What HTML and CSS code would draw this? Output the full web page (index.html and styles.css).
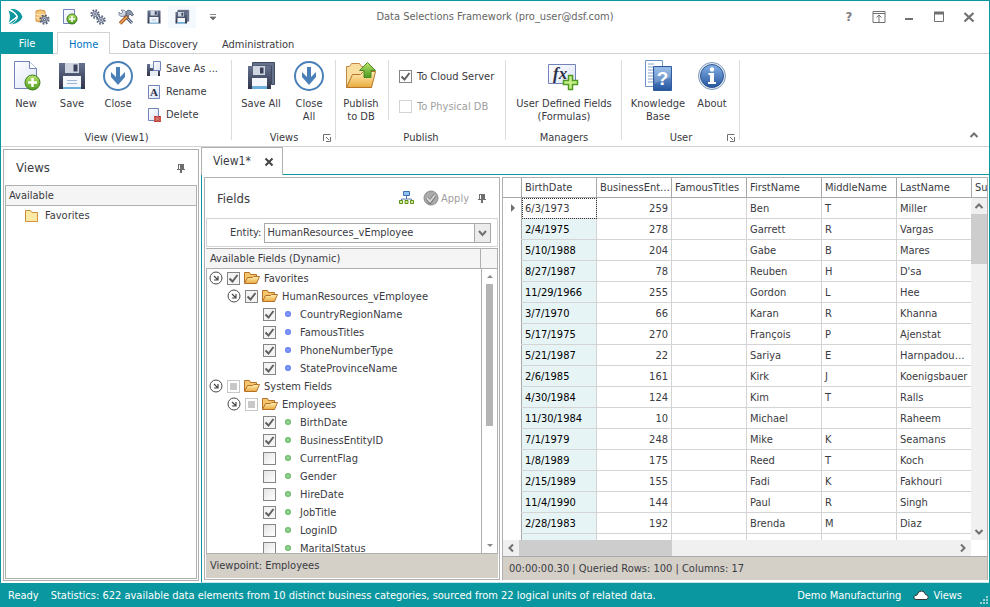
FILE: index.html
```html
<!DOCTYPE html>
<html lang="en">

<head>
	<meta charset="utf-8">
	<title>Data Selections Framework</title>
	<link rel="stylesheet" href="styles.css">
</head>

<body>

	<svg class="sprite" aria-hidden="true">
		<defs>
			<linearGradient id="g-floppy" x1="0" y1="0" x2="0" y2="1">
				<stop offset="0" stop-color="#66728f" />
				<stop offset="1" stop-color="#2f354a" />
			</linearGradient>
			<linearGradient id="g-folder" x1="0" y1="0" x2="0" y2="1">
				<stop offset="0" stop-color="#fff0b8" />
				<stop offset="1" stop-color="#e9a93c" />
			</linearGradient>
			<linearGradient id="g-page" x1="0" y1="0" x2="1" y2="1">
				<stop offset="0" stop-color="#ffffff" />
				<stop offset="1" stop-color="#dbe3f5" />
			</linearGradient>
			<linearGradient id="g-green" x1="0" y1="0" x2="0" y2="1">
				<stop offset="0" stop-color="#b9e36b" />
				<stop offset="1" stop-color="#4b9a1e" />
			</linearGradient>
			<linearGradient id="g-blue" x1="0" y1="0" x2="0" y2="1">
				<stop offset="0" stop-color="#86b2e6" />
				<stop offset="1" stop-color="#24549f" />
			</linearGradient>
		</defs>
		<symbol id="i-floppy" viewBox="0 0 32 32">
			<path d="M3 3h26v26H3z" fill="url(#g-floppy)" />
			<path d="M9 3h14v10H9z" fill="#cfd6e2" />
			<path d="M17.500 4.500h4v7h-4z" fill="#39415a" />
			<path d="M7 16h18v13H7z" fill="#f4f8fd" />
			<path d="M11 20.500h10M11 23.500h10" stroke="#9db6d6" />
			<path d="M7 27h18v2H7z" fill="#6bb0dc" />
		</symbol>
		<symbol id="i-floppies" viewBox="0 0 32 32">
			<path d="M7.500 2.500h22v22h-3V6H7.500z" fill="#66728c" stroke="#424a62" />
			<path d="M3 6h23v23H3z" fill="url(#g-floppy)" />
			<path d="M8 6h12v9H8z" fill="#cfd6e2" />
			<path d="M15 7.500h3.500v6H15z" fill="#39415a" />
			<path d="M7 18h15v11H7z" fill="#f4f8fd" />
			<path d="M7 26h15v3H7z" fill="#6bb0dc" />
		</symbol>
		<symbol id="i-new" viewBox="0 0 32 32">
			<path d="M4.500 1.500h15l7 7v20h-22z" fill="url(#g-page)" stroke="#7183b8" />
			<path d="M19.500 1.500v7h7" fill="#fff" stroke="#7183b8" />
			<circle cx="22.500" cy="22.500" r="7.500" fill="url(#g-green)" stroke="#3d7d1d" />
			<path d="M22.500 18v9M18 22.500h9" stroke="#fff" stroke-width="2.500" />
		</symbol>
		<symbol id="i-new16" viewBox="0 0 16 16">
			<path d="M1.500 .5h11v14h-11z" fill="url(#g-page)" stroke="#7183b8" />
			<circle cx="10" cy="10" r="5" fill="url(#g-green)" stroke="#3d7d1d" />
			<path d="M10 7v6M7 10h6" stroke="#fff" stroke-width="1.600" />
		</symbol>
		<symbol id="i-down" viewBox="0 0 32 32">
			<circle cx="16" cy="16" r="14" fill="#fff" stroke="#4a80b8" stroke-width="2" />
			<path d="M14 7h4v10l5-5v5l-7 8-7-8v-5l5 5z" fill="#4a80b8" />
		</symbol>
		<symbol id="i-saveas" viewBox="0 0 16 16">
			<path d="M1 3h13v12H1z" fill="url(#g-floppy)" />
			<path d="M4 3h4v4H4z" fill="#e9eef5" />
			<path d="M4 10h8v5H4z" fill="#e9eef5" />
			<path d="M7.500 .5h7v9h-7z" fill="url(#g-page)" stroke="#7183b8" />
		</symbol>
		<symbol id="i-delete" viewBox="0 0 16 16">
			<path d="M2.500 1.500h10v12h-10z" fill="url(#g-page)" stroke="#7183b8" />
			<path d="M8 9h7v6H8z" fill="#d9574c" />
			<path d="M9 9.500l5 5M14 9.500l-5 5" stroke="#8e1d18" stroke-width="1.500" />
			<path d="M9.500 10l4 4M13.500 10l-4 4" stroke="#f6b5ae" />
		</symbol>
		<symbol id="i-publish" viewBox="0 0 32 32">
			<path d="M1.500 27.500V6.500h3l2-3h8l2 3h10v21z" fill="#f8dfa0" stroke="#c08a45" />
			<path d="M1.500 27.500l6-13h8l3-3h12l-4 16z" fill="url(#g-folder)" stroke="#b5762b" />
			<path d="M22.500 2.500l8 8h-4.500v7h-7v-7h-4.500z" fill="url(#g-green)" stroke="#4c8a26" />
		</symbol>
		<symbol id="i-info" viewBox="0 0 32 32">
			<circle cx="16" cy="16" r="13.500" fill="#e8eef7" stroke="#7f97ba" />
			<circle cx="16" cy="16" r="11.500" fill="url(#g-blue)" stroke="#2d5593" />
			<circle cx="16" cy="9.500" r="2.200" fill="#fff" />
			<path d="M12.500 13h5.500v9h2v2h-8v-2h2v-7h-1.500z" fill="#fff" />
		</symbol>
		<symbol id="i-logo" viewBox="0 0 16 16">
			<path d="M3 0h4q7 2 8.500 8-2.500 6-11 7.500Q11 11 11 7.500 9 3 3 0z" fill="#0b979f" />
			<path d="M1.500 1.500q6 2 8 6L1.500 13.500q3-5 0-12z" fill="#0b979f" />
			<path d="M9.500 9.500q-2 4-6.500 5.500l-1-.5z" fill="#0b979f" />
			<path d="M1 .5q7 2 9 7l-9 7.500" fill="none" stroke="#fff" stroke-width=".8" />
		</symbol>
		<symbol id="i-gear" viewBox="0 0 16 16">
			<circle cx="8" cy="8" r="6" fill="none" stroke="#56617a" stroke-width="3" stroke-dasharray="2.600 2.110" />
			<circle cx="8" cy="8" r="4" fill="#e4e9f2" stroke="#56617a" stroke-width="1.500" />
			<circle cx="8" cy="8" r="1.600" fill="#fff" stroke="#56617a" stroke-width="1.500" />
		</symbol>
		<symbol id="i-dbgear" viewBox="0 0 16 16">
			<path d="M2 2q4-2 9 0v10q-5 2-9 0z" fill="#f4c77a" stroke="#d79245" />
			<path d="M2 5q4 2 9 0M2 8.500q4 2 9 0" fill="none" stroke="#fff1cf" />
			<use href="#i-gear" x="5" y="5" width="11" height="11" />
		</symbol>
		<symbol id="i-gears" viewBox="0 0 16 16">
			<use href="#i-gear" x="0" y="0" width="10" height="10" />
			<use href="#i-gear" x="6" y="6" width="10" height="10" />
		</symbol>
		<symbol id="i-tools" viewBox="0 0 16 16">
			<path d="M5 5l9 9" stroke="#4c5974" stroke-width="3" />
			<path d="M5 5l9 9" stroke="#c9d1df" />
			<path d="M10 6.500L2 14.500" stroke="#a24f14" stroke-width="3.400" />
			<path d="M9.500 7L2 14.500" stroke="#f2a860" stroke-width="1.400" />
			<path d="M8 3l2-2 3 1 2.500 4-1.500 1-2-2-2.500 3z" fill="#8b97ad" stroke="#4c5974" stroke-width=".8" />
			<path d="M1 3l2 2 2-2-2-2q4-.5 5 2l-1 4-4 .5q-3-1-2-4.500z" fill="#d3dae6" stroke="#6d7890" stroke-width=".8" />
		</symbol>
		<symbol id="i-folder" viewBox="0 0 16 16">
			<path d="M1.500 13.500v-11h5l1.500 2h5.500v9z" fill="#fde9a6" stroke="#c88e3c" />
			<path d="M1.500 13.500h12V5" fill="none" stroke="#d8913d" />
		</symbol>
		<symbol id="i-open" viewBox="0 0 16 16">
			<path d="M.5 12.500v-10h5l1 2h6v8z" fill="#f5c76c" stroke="#b5712a" />
			<path d="M.5 13.500l3-6h5l1-1h6l-3 7z" fill="url(#g-folder)" stroke="#b5712a" />
		</symbol>
		<symbol id="i-pin" viewBox="0 0 10 10">
			<path d="M2 1h6v5h1v1H6v3H4V7H1V6h1z" fill="#6e6e6e" />
			<path d="M3.500 2v4" stroke="#fff" />
		</symbol>
		<symbol id="i-launch" viewBox="0 0 8 8">
			<path d="M.5 7V.5H7.500" fill="none" stroke="#707070" />
			<path d="M3 3l3 3M7.500 3v4.500H3" fill="none" stroke="#707070" />
		</symbol>
		<symbol id="i-expand" viewBox="0 0 14 14">
			<circle cx="7" cy="7" r="6" fill="#fff" stroke="#4a4a4a" />
			<path d="M5 5l3.500 3.500M9 5v4H5" fill="none" stroke="#4a4a4a" stroke-width="1.200" />
		</symbol>
		<symbol id="i-chev" viewBox="0 0 10 10">
			<path d="M1.500 7L5 3.500 8.500 7" fill="none" stroke="#707070" stroke-width="2" />
		</symbol>
		<symbol id="i-tree" viewBox="0 0 16 16">
			<path d="M7.500 6v3M2.500 11V9h10v2" fill="none" stroke="#5878a8" />
			<path d="M4.500 1.500h6v4h-6z" fill="#8ec0f2" stroke="#3b6fb3" />
			<path d="M.5 10.500h3v3h-3zM6 10.500h3v3H6zM11.500 10.500h3v3h-3z" fill="#d6f0a0" stroke="#5d8f12" />
		</symbol>
		<symbol id="i-apply" viewBox="0 0 16 16">
			<circle cx="8" cy="8" r="7" fill="#aaa" stroke="#8c8c8c" />
			<path d="M4 8l3 4 5-7" fill="none" stroke="#777" stroke-width="3.500" />
			<path d="M4 8l3 3.500 5-6.500" fill="none" stroke="#d8d8d8" stroke-width="2" />
		</symbol>
	</svg>

	<div class="window">

		<header class="titlebar">
			<div class="quick">
				<svg class="logo"><use href="#i-logo" /></svg>
				<button type="button" aria-label="Data source"><svg><use href="#i-dbgear" /></svg></button>
				<button type="button" aria-label="New view"><svg><use href="#i-new16" /></svg></button>
				<button type="button" aria-label="Settings"><svg><use href="#i-gears" /></svg></button>
				<button type="button" aria-label="Tools"><svg><use href="#i-tools" /></svg></button>
				<button type="button" aria-label="Save view"><svg><use href="#i-floppy" /></svg></button>
				<button type="button" class="hot" aria-label="Save all views"><svg><use href="#i-floppies" /></svg></button>
				<button type="button" class="more" aria-label="Customize"><svg viewBox="0 0 8 8"><path d="M1 1.500h6M1 4h6L4 7z" fill="#707070" stroke="#707070" stroke-width=".8" /></svg></button>
			</div>
			<div class="title">Data Selections Framework (pro_user@dsf.com)</div>
			<div class="winbuttons">
				<button type="button" class="ask" aria-label="Help">?</button>
				<button type="button" aria-label="Ribbon display"><svg viewBox="0 0 14 14"><path d="M1 1.500h12v11H1zM1 3.500h12M7 12V5M4.500 7.500L7 5l2.500 2.500" fill="none" stroke="#707070" /></svg></button>
				<button type="button" aria-label="Minimize"><svg viewBox="0 0 14 14"><path d="M3 9h8" stroke="#707070" stroke-width="2" /></svg></button>
				<button type="button" aria-label="Maximize"><svg viewBox="0 0 14 14"><path d="M2.500 2.500h9v9h-9z" fill="none" stroke="#707070" /><path d="M2 3h10" stroke="#707070" stroke-width="3" /></svg></button>
				<button type="button" aria-label="Close window"><svg viewBox="0 0 14 14"><path d="M2.500 3l9 8.500M11.500 3l-9 8.500" stroke="#707070" stroke-width="2.200" /></svg></button>
			</div>
		</header>

		<nav class="tabs">
			<button type="button" class="file">File</button>
			<a href="#home" class="tab active">Home</a>
			<a href="#discovery" class="tab">Data Discovery</a>
			<a href="#administration" class="tab">Administration</a>
		</nav>

		<section class="ribbon" id="home">
			<div class="group g-view">
				<div class="tools">
					<button type="button" class="big"><svg><use href="#i-new" /></svg>New</button>
					<button type="button" class="big"><svg><use href="#i-floppy" /></svg>Save</button>
					<button type="button" class="big"><svg><use href="#i-down" /></svg>Close</button>
					<div class="stack">
						<button type="button" class="small"><svg><use href="#i-saveas" /></svg>Save As ...</button>
						<button type="button" class="small"><svg viewBox="0 0 16 16"><path d="M2.500 1.500h11v13h-11z" fill="url(#g-page)" stroke="#7183b8" /><text x="8" y="12" text-anchor="middle" class="serif" font-size="11">A</text></svg>Rename</button>
						<button type="button" class="small"><svg><use href="#i-delete" /></svg>Delete</button>
					</div>
				</div>
				<div class="caption">View (View1)</div>
			</div>
			<div class="group g-views">
				<div class="tools">
					<button type="button" class="big wide"><svg><use href="#i-floppies" /></svg>Save All</button>
					<button type="button" class="big"><svg><use href="#i-down" /></svg>Close<br>All</button>
				</div>
				<div class="caption">Views</div>
				<button type="button" class="launch" aria-label="Views options"><svg><use href="#i-launch" /></svg></button>
			</div>
			<div class="group g-publish">
				<div class="tools">
					<button type="button" class="big"><svg><use href="#i-publish" /></svg>Publish<br>to DB</button>
					<div class="checks">
						<label><input type="checkbox" class="check plain" checked>To Cloud Server</label>
						<label class="off"><input type="checkbox" class="check plain" disabled>To Physical DB</label>
					</div>
				</div>
				<div class="caption">Publish</div>
			</div>
			<div class="group g-managers">
				<div class="tools">
					<button type="button" class="big"><svg viewBox="0 0 32 32"><path d="M.5 4.500h27v19H.5z" fill="url(#g-page)" stroke="#7183b8" /><text x="5" y="19" class="serif italic" font-size="17">fx</text><path d="M20.500 15.500h4v5h5v4h-5v5h-4v-5h-5v-4h5z" fill="#c7f08a" stroke="#4f9a25" stroke-width="1.500" /></svg>User Defined Fields<br>(Formulas)</button>
				</div>
				<div class="caption">Managers</div>
			</div>
			<div class="group g-user">
				<div class="tools">
					<button type="button" class="big wider"><svg viewBox="0 0 32 32"><path d="M3.500 .5h17v26h-17z" fill="#fff" stroke="#6e93c8" /><path d="M6 4h6M6 7h6M6 10h6M6 13h6M6 16h6M6 19h6M6 22h6" stroke="#8aa5cc" /><path d="M11.500 6.500h18v24h-18z" fill="url(#g-blue)" stroke="#315d9c" /><path d="M12.500 7.500h16v10l-16 6z" fill="#fff" opacity=".2" /><text x="20.500" y="25" text-anchor="middle" class="mark-q" font-size="19">?</text></svg>Knowledge<br>Base</button>
					<button type="button" class="big"><svg><use href="#i-info" /></svg>About</button>
				</div>
				<div class="caption">User</div>
				<button type="button" class="launch" aria-label="User options"><svg><use href="#i-launch" /></svg></button>
			</div>
			<button type="button" class="collapse" aria-label="Collapse ribbon"><svg><use href="#i-chev" /></svg></button>
		</section>

		<main class="work">

			<aside class="views">
				<div class="panelhead">
					<h2>Views</h2>
					<button type="button" aria-label="Pin views"><svg class="pin"><use href="#i-pin" /></svg></button>
				</div>
				<div class="viewlist">
					<div class="listhead">Available</div>
					<a href="#favorites" class="viewitem"><svg><use href="#i-folder" /></svg>Favorites</a>
				</div>
			</aside>

			<section class="doc">
				<div class="doctabs">
					<div class="doctab">View1*
						<button type="button" aria-label="Close view"><svg viewBox="0 0 10 10"><path d="M1.500 1.500l7 7M8.500 1.500l-7 7" stroke="#444" stroke-width="2" /></svg></button>
					</div>
				</div>
				<div class="docbody">

					<div class="fields">
						<div class="panelhead">
							<h2>Fields</h2>
							<button type="button" aria-label="Show hierarchy"><svg class="icon"><use href="#i-tree" /></svg></button>
							<button type="button" class="apply" disabled><svg class="icon"><use href="#i-apply" /></svg>Apply</button>
							<button type="button" aria-label="Pin fields"><svg class="pin"><use href="#i-pin" /></svg></button>
						</div>
						<div class="entity">
							<label for="entity">Entity:</label>
							<select id="entity">
								<option>HumanResources_vEmployee</option>
							</select>
						</div>
						<div class="listhead treehead"><span>Available Fields (Dynamic)</span></div>
						<div class="treebox">
							<ul class="tree">
								<li class="l1"><svg class="exp"><use href="#i-expand" /></svg><label><input type="checkbox" class="check" checked><svg class="icon"><use href="#i-open" /></svg>Favorites</label></li>
								<li class="l2"><svg class="exp"><use href="#i-expand" /></svg><label><input type="checkbox" class="check" checked><svg class="icon"><use href="#i-open" /></svg>HumanResources_vEmployee</label></li>
								<li class="l3"><label><input type="checkbox" class="check" checked><i class="dot blue"></i>CountryRegionName</label></li>
								<li class="l3"><label><input type="checkbox" class="check" checked><i class="dot blue"></i>FamousTitles</label></li>
								<li class="l3"><label><input type="checkbox" class="check" checked><i class="dot blue"></i>PhoneNumberType</label></li>
								<li class="l3"><label><input type="checkbox" class="check" checked><i class="dot blue"></i>StateProvinceName</label></li>
								<li class="l1"><svg class="exp"><use href="#i-expand" /></svg><label><input type="checkbox" class="check partial"><svg class="icon"><use href="#i-open" /></svg>System Fields</label></li>
								<li class="l2"><svg class="exp"><use href="#i-expand" /></svg><label><input type="checkbox" class="check partial"><svg class="icon"><use href="#i-open" /></svg>Employees</label></li>
								<li class="l3"><label><input type="checkbox" class="check" checked><i class="dot"></i>BirthDate</label></li>
								<li class="l3"><label><input type="checkbox" class="check" checked><i class="dot"></i>BusinessEntityID</label></li>
								<li class="l3"><label><input type="checkbox" class="check"><i class="dot"></i>CurrentFlag</label></li>
								<li class="l3"><label><input type="checkbox" class="check"><i class="dot"></i>Gender</label></li>
								<li class="l3"><label><input type="checkbox" class="check"><i class="dot"></i>HireDate</label></li>
								<li class="l3"><label><input type="checkbox" class="check" checked><i class="dot"></i>JobTitle</label></li>
								<li class="l3"><label><input type="checkbox" class="check"><i class="dot"></i>LoginID</label></li>
								<li class="l3"><label><input type="checkbox" class="check"><i class="dot"></i>MaritalStatus</label></li>
							</ul>
							<div class="treescroll">
								<i class="up"></i>
								<div class="track"><div class="thumb"></div></div>
								<i class="down"></i>
							</div>
						</div>
						<div class="strip">Viewpoint: Employees</div>
					</div>

					<div class="data">
						<div class="gridbox">
							<table class="grid">
								<colgroup>
									<col class="c-mark"><col class="c"><col class="c"><col class="c"><col class="c"><col class="c"><col class="c"><col>
								</colgroup>
								<thead>
									<tr><th></th><th>BirthDate</th><th>BusinessEntityID</th><th>FamousTitles</th><th>FirstName</th><th>MiddleName</th><th>LastName</th><th class="cut">Suffix</th></tr>
								</thead>
								<tbody>
									<tr class="current"><td><i class="mark"></i></td><td>6/3/1973</td><td>259</td><td></td><td>Ben</td><td>T</td><td>Miller</td><td></td></tr>
									<tr><td></td><td>2/4/1975</td><td>278</td><td></td><td>Garrett</td><td>R</td><td>Vargas</td><td></td></tr>
									<tr><td></td><td>5/10/1988</td><td>204</td><td></td><td>Gabe</td><td>B</td><td>Mares</td><td></td></tr>
									<tr><td></td><td>8/27/1987</td><td>78</td><td></td><td>Reuben</td><td>H</td><td>D'sa</td><td></td></tr>
									<tr><td></td><td>11/29/1966</td><td>255</td><td></td><td>Gordon</td><td>L</td><td>Hee</td><td></td></tr>
									<tr><td></td><td>3/7/1970</td><td>66</td><td></td><td>Karan</td><td>R</td><td>Khanna</td><td></td></tr>
									<tr><td></td><td>5/17/1975</td><td>270</td><td></td><td>François</td><td>P</td><td>Ajenstat</td><td></td></tr>
									<tr><td></td><td>5/21/1987</td><td>22</td><td></td><td>Sariya</td><td>E</td><td>Harnpadoungsataya</td><td></td></tr>
									<tr><td></td><td>2/6/1985</td><td>161</td><td></td><td>Kirk</td><td>J</td><td>Koenigsbauer</td><td></td></tr>
									<tr><td></td><td>4/30/1984</td><td>124</td><td></td><td>Kim</td><td>T</td><td>Ralls</td><td></td></tr>
									<tr><td></td><td>11/30/1984</td><td>10</td><td></td><td>Michael</td><td></td><td>Raheem</td><td></td></tr>
									<tr><td></td><td>7/1/1979</td><td>248</td><td></td><td>Mike</td><td>K</td><td>Seamans</td><td></td></tr>
									<tr><td></td><td>1/8/1989</td><td>175</td><td></td><td>Reed</td><td>T</td><td>Koch</td><td></td></tr>
									<tr><td></td><td>2/15/1989</td><td>155</td><td></td><td>Fadi</td><td>K</td><td>Fakhouri</td><td></td></tr>
									<tr><td></td><td>11/4/1990</td><td>144</td><td></td><td>Paul</td><td>R</td><td>Singh</td><td></td></tr>
									<tr><td></td><td>2/28/1983</td><td>192</td><td></td><td>Brenda</td><td>M</td><td>Diaz</td><td></td></tr>
									<tr><td></td><td>5/10/1985</td><td>60</td><td></td><td>Andy</td><td>C</td><td>Ruth</td><td></td></tr>
								</tbody>
							</table>
							<div class="vscroll">
								<button type="button" aria-label="Scroll up"><svg><use href="#i-chev" /></svg></button>
								<div class="track"><div class="thumb"></div></div>
								<button type="button" class="r180" aria-label="Scroll down"><svg><use href="#i-chev" /></svg></button>
							</div>
						</div>
						<div class="hscroll">
							<button type="button" class="r270" aria-label="Scroll left"><svg><use href="#i-chev" /></svg></button>
							<div class="track"><div class="thumb"></div></div>
							<button type="button" class="r90" aria-label="Scroll right"><svg><use href="#i-chev" /></svg></button>
						</div>
						<div class="strip">00:00:00.30 | Queried Rows: 100 | Columns: 17</div>
					</div>

				</div>
			</section>

		</main>

		<footer class="status">
			<span>Ready</span>
			<span class="stats">Statistics: 622 available data elements from 10 distinct business categories, sourced from 22 logical units of related data.</span>
			<span>Demo Manufacturing</span>
			<span class="cloud"><svg viewBox="0 0 16 12"><path d="M3 10.500Q.5 10 .8 8 1.500 6 4 6 5 2 8.500 2q3 0 4 3.500 3 .5 2.700 3-.5 2-2.200 2z" fill="#fff" stroke="#333" /></svg>Views</span>
			<svg class="grip" viewBox="0 0 8 8"><path d="M6 0h2v2H6zM3 3h2v2H3zM6 3h2v2H6zM0 6h2v2H0zM3 6h2v2H3zM6 6h2v2H6z" fill="#9fd0d3" /></svg>
		</footer>

	</div>

</body>

</html>
```
FILE: styles.css
```css
* {
	box-sizing: border-box;
}

body {
	margin: 0;
	font: 11px/13px "DejaVu Sans Condensed", "DejaVu Sans", Tahoma, sans-serif;
	color: #3a3a42;
}

button {
	display: flex;
	align-items: center;
	justify-content: center;
	padding: 0;
	border: 0;
	background: none;
	font: inherit;
	color: inherit;
}

a {
	color: inherit;
	text-decoration: none;
}

svg {
	flex: none;
	width: 16px;
	height: 16px;
}

.sprite {
	position: absolute;
	width: 0;
	height: 0;
}

.serif {
	font-family: "Liberation Serif", serif;
	font-weight: bold;
	fill: #2b3044;
}

.italic {
	font-style: italic;
}

.mark-q {
	font-family: "Liberation Sans", sans-serif;
	font-weight: bold;
	fill: #fff;
}

.window {
	display: flex;
	flex-direction: column;
	height: 100vh;
	border: 1px solid #0b979f;
	border-bottom: 0;
	background: #fff;
}

/* title bar */
.titlebar {
	display: grid;
	grid-template-columns: 1fr auto 1fr;
	align-items: center;
	height: 31px;
}

.quick {
	display: flex;
	align-items: center;
}

.quick button {
	width: 28px;
	height: 22px;
}

.quick .logo {
	margin: 0 5px 0 6px;
}

.quick .hot {
	background: #f4f9fe;
}

.quick .more {
	width: 34px;
}

.quick .more svg {
	width: 8px;
	height: 8px;
}

.title {
	color: #666;
}

.winbuttons {
	display: flex;
	justify-content: flex-end;
	padding-right: 5px;
}

.winbuttons button {
	width: 30px;
	height: 22px;
}

.winbuttons svg {
	width: 14px;
	height: 14px;
}

.winbuttons .ask {
	font-size: 13px;
	font-weight: bold;
	color: #808080;
}

/* tabs */
.tabs {
	display: flex;
	height: 22px;
	border-bottom: 1px solid #d2d2d2;
}

.tabs .file {
	width: 52px;
	height: 22px;
	margin-right: 4px;
	background: #0b979f;
	color: #fff;
}

.tab {
	height: 22px;
	padding: 5px 11px 0;
	border: 1px solid transparent;
	border-bottom: 0;
}

.tab.active {
	border-color: #d2d2d2;
	background: #fff;
	color: #0072c6;
}

/* ribbon */
.ribbon {
	display: flex;
	height: 93px;
	padding-top: 6px;
	border-bottom: 1px solid #d2d2d2;
}

.group {
	display: grid;
	grid-template: minmax(0, 1fr) 13px / 1fr;
	padding-bottom: 2px;
	background: linear-gradient(#dcdcdc, #dcdcdc) right top / 1px 80px no-repeat;
}

.g-view {
	width: 231px;
}

.g-views {
	width: 104px;
}

.g-publish {
	width: 170px;
}

.g-managers {
	width: 116px;
}

.g-user {
	width: 118px;
}

.tools {
	display: flex;
	justify-content: center;
}

.g-view .tools,
.g-publish .tools {
	justify-content: flex-start;
	padding-left: 2px;
}

.caption {
	grid-area: 2 / 1;
	text-align: center;
}

.launch {
	grid-area: 2 / 1;
	justify-self: end;
	align-self: center;
	margin-right: 5px;
}

.launch svg {
	width: 8px;
	height: 8px;
}

.big {
	flex-direction: column;
	justify-content: flex-start;
	min-width: 46px;
	gap: 5px;
	align-self: flex-start;
	text-align: center;
}

.big.wide {
	min-width: 50px;
}

.big.wider {
	min-width: 62px;
}

.big svg {
	width: 32px;
	height: 32px;
}

.stack {
	display: flex;
	flex-direction: column;
	padding-left: 5px;
}

.small {
	justify-content: flex-start;
	height: 23px;
	gap: 4px;
	margin-top: -3px;
	margin-bottom: 3px;
}

.checks {
	display: flex;
	flex-direction: column;
	gap: 16px;
	height: 60px;
	margin-left: 4px;
	padding: 9px 0 0 10px;
	border-left: 1px solid #dcdcdc;
}

.checks label {
	display: flex;
	align-items: center;
	gap: 5px;
	height: 14px;
}

.checks .off {
	color: #a0a0a0;
}

.collapse {
	margin: auto 10px 6px auto;
}

.collapse svg {
	width: 10px;
	height: 10px;
}

/* tick boxes */
.check {
	appearance: none;
	flex: none;
	width: 13px;
	height: 13px;
	margin: 0;
	border: 1px solid #858585;
	background: linear-gradient(135deg, #e4e4e4, #fff) center no-repeat;
}

.check:checked {
	background: url("data:image/svg+xml,%3Csvg xmlns='http://www.w3.org/2000/svg' viewBox='0 0 11 11'%3E%3Cpath d='M1.500 5.500l3 3 5-6.500' fill='none' stroke='%23606060' stroke-width='2'/%3E%3C/svg%3E") center no-repeat, #f4f4f4;
}

.check.plain {
	background-color: #fff;
}

.check.plain:disabled {
	border-color: #d4d4d4;
	background: #fff;
}

.check.partial {
	border-color: #c8c8c8;
	background: linear-gradient(#c8c8c8, #c8c8c8) center / 7px 7px no-repeat;
}

/* work area */
.work {
	display: flex;
	flex: 1;
	min-height: 0;
}

.views {
	display: flex;
	flex-direction: column;
	width: 196px;
	margin: 2px;
	padding: 0 1px 1px;
	border: 1px solid #b0b0b0;
}

.panelhead {
	display: flex;
	align-items: center;
	height: 35px;
	padding: 0 11px;
}

.panelhead h2 {
	flex: 1;
	margin: 0;
	font-size: 13px;
	font-weight: normal;
}

.pin {
	width: 10px;
	height: 10px;
}

.viewlist {
	flex: 1;
	border: 1px solid #b0b0b0;
}

.listhead {
	padding: 3px;
	border-bottom: 1px solid #b0b0b0;
	background: #f5f5f5;
}

.viewitem {
	display: flex;
	align-items: center;
	gap: 5px;
	height: 19px;
	padding-left: 18px;
}

.doc {
	display: flex;
	flex: 1;
	flex-direction: column;
	min-width: 0;
}

.doctabs {
	display: flex;
	height: 28px;
	border-bottom: 1px solid #0b979f;
}

.doctab {
	display: flex;
	align-items: center;
	gap: 13px;
	height: 28px;
	padding: 0 8px 0 11px;
	border: 1px solid #b0b0b0;
	border-bottom: 0;
	background: #fff;
	font-size: 12px;
}

.doctab svg {
	width: 10px;
	height: 10px;
}

.docbody {
	display: flex;
	flex: 1;
	gap: 2px;
	min-height: 0;
	padding: 2px 1px 2px 2px;
	border-left: 1px solid #0b979f;
	border-bottom: 1px solid #c9e6e8;
}

/* fields panel */
.fields {
	display: flex;
	flex-direction: column;
	width: 296px;
	padding: 0 1px 1px;
	border: 1px solid #b0b0b0;
}

.fields .panelhead {
	height: 40px;
}

.fields .icon {
	width: 16px;
	height: 16px;
}

.apply {
	gap: 2px;
	margin: 0 8px;
	color: #a0a0a0;
}

.entity {
	display: flex;
	align-items: center;
	gap: 3px;
	height: 29px;
	padding: 0 6px 0 23px;
	border: 1px solid #d4d4d4;
}

.entity select {
	appearance: none;
	flex: 1;
	min-width: 0;
	height: 20px;
	padding: 0 2px;
	border: 1px solid #a8a8a8;
	border-radius: 0;
	background: url("data:image/svg+xml,%3Csvg xmlns='http://www.w3.org/2000/svg' viewBox='0 0 16 18'%3E%3Cpath d='M0 0h16v18H0z' fill='%23ececec'/%3E%3Cpath d='M.5 0v18' stroke='%23a8a8a8'/%3E%3Cpath d='M5 7l3.500 4L12 7' fill='none' stroke='%23707070' stroke-width='2'/%3E%3C/svg%3E") right / 16px 18px no-repeat #fff;
	font: inherit;
	color: inherit;
}

.treehead {
	height: 21px;
	margin-top: 1px;
	padding: 0;
	border: 1px solid #b0b0b0;
	border-left: 0;
}

.treehead span {
	display: block;
	height: 19px;
	margin-right: 16px;
	padding: 3px 4px;
	border-right: 1px solid #b0b0b0;
}

.treebox {
	display: flex;
	flex: 1;
	min-height: 0;
	border: 1px solid #b0b0b0;
	border-top: 0;
}

.tree {
	flex: 1;
	margin: 0;
	padding: 0;
	overflow: hidden;
	list-style: none;
}

.tree li,
.tree label {
	display: flex;
	align-items: center;
	gap: 4px;
	height: 18px;
}

.tree .exp {
	width: 14px;
	height: 14px;
}

.l1 {
	padding-left: 2px;
}

.l2 {
	padding-left: 20px;
}

.l3 {
	padding-left: 56px;
}

.dot {
	width: 6px;
	height: 6px;
	margin: 0 6px;
	border-radius: 50%;
	background: radial-gradient(#a5dda0, #4aa64a);
}

.l3 label {
	gap: 3px;
}

.dot.blue {
	background: radial-gradient(#8fa8ff, #4a64ee);
}

.treescroll {
	display: flex;
	flex-direction: column;
	align-items: center;
	width: 16px;
	padding: 6px 0;
	border-left: 1px solid #b0b0b0;
}

.treescroll .track {
	flex: 1;
	width: 7px;
	padding: 6px 0;
}

.treescroll .thumb {
	height: 56%;
	background: #b4b4b4;
}

.up,
.down {
	border: 3px solid transparent;
	border-top: 0;
	border-bottom: 3px solid #8a8a8a;
}

.down {
	border-bottom: 0;
	border-top: 3px solid #8a8a8a;
}

.strip {
	height: 24px;
	padding: 5px 4px;
	background: #d4d0c8;
}

/* data grid */
.data {
	display: flex;
	flex: 1;
	flex-direction: column;
	min-width: 0;
	border: 1px solid #b0b0b0;
	border-bottom: 0;
}

.gridbox {
	display: grid;
	flex: 1;
	grid-template: minmax(0, 1fr) / minmax(0, 1fr) 16px;
	min-height: 0;
	overflow: hidden;
}

.grid {
	grid-area: 1 / 1 / 2 / 3;
	align-self: start;
	width: 100%;
	table-layout: fixed;
	border-collapse: separate;
	border-spacing: 0;
}

.c-mark {
	width: 19px;
}

.c {
	width: 75px;
}

.grid th,
.grid td {
	height: 21px;
	padding: 0 1px 0 3px;
	overflow: hidden;
	border-right: 1px solid #d4d4d4;
	border-bottom: 1px solid #d4d4d4;
	font-weight: normal;
	text-align: left;
	text-overflow: ellipsis;
	white-space: nowrap;
}

.grid th {
	height: 20px;
	border-color: #a8a8a8;
}

.grid th.cut {
	text-overflow: clip;
	padding-right: 0;
	border-right: 0;
}

.grid td:first-child {
	border-color: #fff #a8a8a8 #fff #fff;
}

.grid td:nth-child(2) {
	background: #e6f4f6;
	color: #000;
}

.grid td:nth-child(3) {
	padding-right: 3px;
	text-align: right;
}

.grid .current td:nth-child(2) {
	outline: 1px dotted #333;
	outline-offset: -1px;
	background: #fff;
	color: #3a3a42;
}

.mark {
	display: block;
	width: 4px;
	margin-left: 5px;
	border: 4px solid transparent;
	border-left-color: #707070;
	border-right: 0;
}

.vscroll {
	display: flex;
	grid-area: 1 / 2;
	flex-direction: column;
	margin-top: 20px;
	background: #f0f0f0;
}

.vscroll button,
.hscroll button {
	width: 16px;
	height: 16px;
}

.vscroll svg,
.hscroll svg {
	width: 10px;
	height: 10px;
}

.track {
	flex: 1;
}

.vscroll .thumb {
	height: 16%;
	background: #cdcdcd;
}

.hscroll {
	display: flex;
	height: 16px;
	margin-right: 16px;
	background: #f0f0f0;
}

.hscroll .thumb {
	width: 35%;
	height: 16px;
	background: #cdcdcd;
}

.r90 {
	transform: rotate(90deg);
}

.r180 {
	transform: rotate(180deg);
}

.r270 {
	transform: rotate(270deg);
}

.data .strip {
	padding-left: 6px;
	border-top: 1px solid #a8a8a8;
}

/* status bar */
.status {
	display: flex;
	align-items: center;
	gap: 12px;
	height: 24px;
	padding: 0 1px 0 7px;
	background: #0b979f;
	color: #fff;
}

.stats {
	flex: 1;
}

.cloud {
	display: flex;
	align-items: center;
	gap: 4px;
}

.cloud svg {
	height: 12px;
}

.status .grip {
	align-self: flex-end;
	width: 8px;
	height: 8px;
	margin: 0 0 3px 6px;
}
```
